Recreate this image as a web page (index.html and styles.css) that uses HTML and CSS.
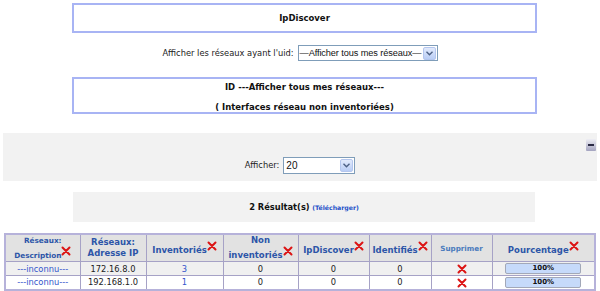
FILE: index.html
```html
<!DOCTYPE html>
<html lang="fr">
<head>
    <meta charset="UTF-8">
    <meta name="viewport" content="width=device-width, initial-scale=1.0">
    <title>IpDiscover</title>
    <link rel="stylesheet" href="styles.css">
</head>
<body>
    <div class="page">
        <div class="title-box">
            <p class="title">IpDiscover</p>
        </div>

        <div class="filter-row">
            <span class="label">Afficher les réseaux ayant l'uid:</span>
            <span class="select select-uid">
                <span class="value">—Afficher tous mes réseaux—</span>
                <span class="arrow"><svg width="7" height="5" viewBox="0 0 7 5"><path d="M0.5 0.8 L3.5 3.8 L6.5 0.8" fill="none" stroke="#4d6185" stroke-width="1.4"/></svg></span>
            </span>
        </div>

        <div class="title-box info-box">
            <p class="title">ID ---Afficher tous mes réseaux---</p>
            <p class="title">( Interfaces réseau non inventoriées)</p>
        </div>

        <div class="options-panel">
            <span class="collapse-btn"><span></span></span>
            <span class="label">Afficher:</span>
            <span class="select select-count">
                <span class="value">20</span>
                <span class="arrow"><svg width="7" height="5" viewBox="0 0 7 5"><path d="M0.5 0.8 L3.5 3.8 L6.5 0.8" fill="none" stroke="#4d6185" stroke-width="1.4"/></svg></span>
            </span>
        </div>

        <div class="results-box">
            <span class="count">2 Résultat(s)</span> <a class="download" href="#">(Télécharger)</a>
        </div>

        <table class="list">
            <colgroup>
                <col style="width: 75px">
                <col style="width: 66px">
                <col style="width: 77px">
                <col style="width: 75px">
                <col style="width: 71px">
                <col style="width: 62px">
                <col style="width: 61px">
                <col style="width: 103px">
            </colgroup>
            <thead>
                <tr>
                    <th class="small">Réseaux: <span class="nw">Description<svg class="x x-head" viewBox="0 0 10 10"><path d="M1.5 1.5 L8.5 8.5 M8.5 1.5 L1.5 8.5"/></svg></span></th>
                    <th>Réseaux: Adresse IP</th>
                    <th><span class="nw">Inventoriés<svg class="x x-head" viewBox="0 0 10 10"><path d="M1.5 1.5 L8.5 8.5 M8.5 1.5 L1.5 8.5"/></svg></span></th>
                    <th>Non <span class="nw">inventoriés<svg class="x x-head" viewBox="0 0 10 10"><path d="M1.5 1.5 L8.5 8.5 M8.5 1.5 L1.5 8.5"/></svg></span></th>
                    <th><span class="nw">IpDiscover<svg class="x x-head" viewBox="0 0 10 10"><path d="M1.5 1.5 L8.5 8.5 M8.5 1.5 L1.5 8.5"/></svg></span></th>
                    <th><span class="nw">Identifiés<svg class="x x-head" viewBox="0 0 10 10"><path d="M1.5 1.5 L8.5 8.5 M8.5 1.5 L1.5 8.5"/></svg></span></th>
                    <th class="small light">Supprimer</th>
                    <th><span class="nw">Pourcentage<svg class="x x-head" viewBox="0 0 10 10"><path d="M1.5 1.5 L8.5 8.5 M8.5 1.5 L1.5 8.5"/></svg></span></th>
                </tr>
            </thead>
            <tbody>
                <tr class="odd">
                    <td><a href="#">---inconnu---</a></td>
                    <td>172.16.8.0</td>
                    <td><a href="#">3</a></td>
                    <td>0</td>
                    <td>0</td>
                    <td>0</td>
                    <td><svg class="x x-row" viewBox="0 0 10 10"><path d="M1.5 1.5 L8.5 8.5 M8.5 1.5 L1.5 8.5"/></svg></td>
                    <td><div class="bar">100%</div></td>
                </tr>
                <tr>
                    <td><a href="#">---inconnu---</a></td>
                    <td>192.168.1.0</td>
                    <td><a href="#">1</a></td>
                    <td>0</td>
                    <td>0</td>
                    <td>0</td>
                    <td><svg class="x x-row" viewBox="0 0 10 10"><path d="M1.5 1.5 L8.5 8.5 M8.5 1.5 L1.5 8.5"/></svg></td>
                    <td><div class="bar">100%</div></td>
                </tr>
            </tbody>
        </table>
    </div>
</body>
</html>
```

FILE: styles.css
```css
* {
    margin: 0;
    padding: 0;
    box-sizing: border-box;
}

body {
    font-family: "DejaVu Sans", sans-serif;
    font-size: 8.3px;
    color: #222;
    background: #fff;
}

a {
    color: #3355cc;
    text-decoration: none;
}

.page {
    padding: 3px 3px 0 3px;
    text-align: center;
}

.title {
    font-weight: bold;
    font-size: 8.5px;
    color: #111;
}

.title-box {
    width: 465px;
    margin-left: 69px;
    height: 30px;
    border: 2px solid #a8b4f4;
    line-height: 26px;
}

.info-box {
    height: 37px;
    margin-top: 16px;
    line-height: 14px;
    padding-top: 1px;
}

.info-box .title + .title {
    margin-top: 6px;
}

.filter-row {
    margin-top: 12px;
    height: 16px;
    display: flex;
    justify-content: center;
    align-items: center;
    gap: 4px;
}

.select {
    display: inline-flex;
    align-items: center;
    border: 1px solid #7f9db9;
    background: #fff;
    font-family: "Liberation Sans", Arial, sans-serif;
    font-size: 10px;
    color: #111;
    text-align: left;
}

.select .value {
    flex: 1;
    padding-left: 2px;
    white-space: nowrap;
}

.select .arrow {
    flex: none;
    width: 13px;
    height: 13px;
    margin-right: 1px;
    border: 1px solid #b4c6ee;
    border-radius: 2px;
    background: linear-gradient(#e2eafc, #b9cdf5);
    display: flex;
    align-items: center;
    justify-content: center;
}

.select-uid {
    width: 140px;
    height: 16px;
    font-size: 9.2px;
    letter-spacing: -0.1px;
}

.select-uid .value {
    padding-left: 1px;
}

.select-count {
    width: 72px;
    height: 17px;
}

.options-panel {
    position: relative;
    margin-top: 19px;
    height: 48px;
    background: #f2f2f2;
    padding-top: 24px;
    display: flex;
    justify-content: center;
    align-items: flex-start;
    gap: 4px;
}

.options-panel .label {
    line-height: 17px;
}

.collapse-btn {
    position: absolute;
    top: 6px;
    right: 1px;
    width: 10px;
    height: 12px;
    border-radius: 1px;
    background: linear-gradient(#eeeef4, #a4a4c0);
    display: flex;
    align-items: center;
    justify-content: center;
}

.collapse-btn span {
    width: 6px;
    height: 2px;
    background: #2a2a44;
}

.results-box {
    width: 462px;
    margin: 11px 0 0 70px;
    height: 30px;
    line-height: 30px;
    background: #f2f2f2;
}

.results-box .count {
    font-weight: bold;
    font-size: 8.3px;
    color: #111;
}

.results-box .download {
    font-weight: bold;
    font-size: 6.2px;
    color: #2250c8;
}

.list {
    margin: 11px 0 0 1px;
    width: 590px;
    table-layout: fixed;
    border-collapse: collapse;
    border: 2px solid #b6b2da;
}

.list th,
.list td {
    border: 1px solid #a6a2c6;
    text-align: center;
    vertical-align: middle;
}

.list th {
    height: 25px;
    background: #e2e2e2;
    font-size: 8.5px;
    line-height: 11px;
    color: #2c55a8;
    padding: 0 1px;
}

.list th.small {
    font-size: 7.3px;
    line-height: 11px;
}

.list th.light {
    font-size: 7.2px;
    color: #4a7bbd;
}

.nw {
    white-space: nowrap;
}

.list td {
    height: 14px;
    line-height: 12px;
}

.list tr.odd td {
    background: #f0f0f0;
}

.x {
    stroke: #dc1414;
    stroke-width: 2;
    stroke-linecap: round;
    fill: none;
}

.x-head {
    width: 10px;
    height: 10px;
    vertical-align: 2px;
}

.x-row {
    width: 10px;
    height: 10px;
    vertical-align: middle;
}

.bar {
    width: 76px;
    height: 11px;
    margin: 0 auto;
    border: 1px solid #a2a8b8;
    border-radius: 2px;
    background: #c6dafa;
    font-size: 7px;
    font-weight: bold;
    line-height: 9px;
    color: #111;
}
```
